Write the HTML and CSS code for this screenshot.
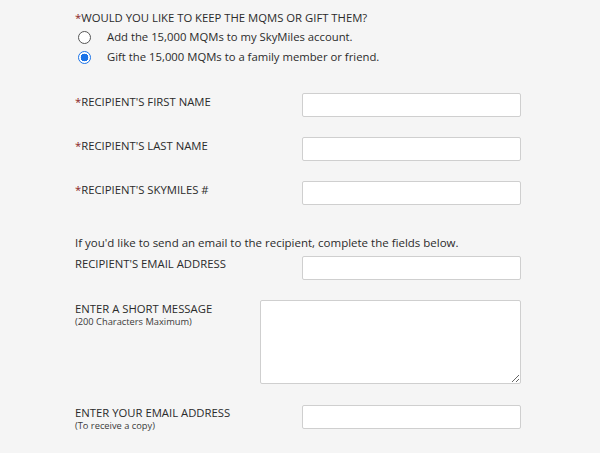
FILE: index.html
```html
<!DOCTYPE html>
<html>
<head>
<meta charset="utf-8">
<link rel="stylesheet" href="styles.css">
</head>
<body>
<form class="form">
  <p class="question"><span class="req">*</span>WOULD YOU LIKE TO KEEP THE MQMS OR GIFT THEM?</p>
  <div class="radios">
    <label class="radio"><span class="circle"></span>Add the 15,000 MQMs to my SkyMiles account.</label>
    <label class="radio"><span class="circle checked"></span>Gift the 15,000 MQMs to a family member or friend.</label>
  </div>

  <div class="row first">
    <div class="lbl"><span class="req">*</span>RECIPIENT'S FIRST NAME</div>
    <input class="field" type="text">
  </div>
  <div class="row">
    <div class="lbl"><span class="req">*</span>RECIPIENT'S LAST NAME</div>
    <input class="field" type="text">
  </div>
  <div class="row">
    <div class="lbl"><span class="req">*</span>RECIPIENT'S SKYMILES #</div>
    <input class="field" type="text">
  </div>

  <p class="note">If you'd like to send an email to the recipient, complete the fields below.</p>
  <div class="row email">
    <div class="lbl">RECIPIENT'S EMAIL ADDRESS</div>
    <input class="field" type="text">
  </div>
  <div class="row msg">
    <div class="lbl">ENTER A SHORT MESSAGE<small>(200 Characters Maximum)</small></div>
    <textarea class="area"></textarea>
  </div>
  <div class="row mine">
    <div class="lbl">ENTER YOUR EMAIL ADDRESS<small>(To receive a copy)</small></div>
    <input class="field" type="text">
  </div>
</form>
</body>
</html>
```
FILE: styles.css
```css
html, body {
  margin: 0;
  padding: 0;
  background: #f5f5f5;
}
body {
  font-family: "Open Sans", "DejaVu Sans", sans-serif;
  color: #2b2b2b;
}
.form {
  width: 446px;
  margin-left: 75px;
  padding-top: 11px;
  display: flex;
  flex-direction: column;
}
.req {
  color: #8c1d1d;
}
.question {
  margin: 0;
  font-size: 11.3px;
  line-height: 14px;
}
.radios {
  display: flex;
  flex-direction: column;
  margin-top: 2px;
}
.radio {
  display: flex;
  align-items: center;
  height: 20px;
  font-size: 11.3px;
  line-height: 20px;
}
.circle {
  box-sizing: border-box;
  width: 13px;
  height: 13px;
  border-radius: 50%;
  border: 1px solid #555;
  background: #fff;
  margin-left: 3px;
  margin-right: 16px;
  margin-top: 1px;
}
.circle.checked {
  border: 1px solid #1a73e8;
  background: radial-gradient(circle, #1a73e8 0 3.6px, #fff 4.1px);
}
.row {
  display: flex;
  justify-content: space-between;
  align-items: flex-start;
  margin-top: 20px;
}
.row.first {
  margin-top: 26px;
}
.lbl {
  font-size: 11.3px;
  line-height: 14px;
  padding-top: 2px;
}
.lbl small {
  display: block;
  font-size: 9.3px;
  line-height: 12px;
  color: #3a3a3a;
}
.field {
  box-sizing: border-box;
  width: 219px;
  height: 24px;
  margin: 0;
  border: 1px solid #cfcfcf;
  border-radius: 2px;
  background: #fff;
  padding: 0;
}
.area {
  box-sizing: border-box;
  width: 261px;
  height: 84px;
  margin: 0;
  border: 1px solid #cfcfcf;
  border-radius: 2px;
  background: #fff;
  padding: 0;
  resize: both;
}
.note {
  margin: 31px 0 0 0;
  font-size: 11.5px;
  line-height: 14px;
}
.row.email {
  margin-top: 6px;
}
.row.email .lbl {
  padding-top: 1px;
}
.row.msg {
  margin-top: 20px;
}
.row.msg .lbl {
  padding-top: 2px;
}
.row.mine {
  margin-top: 21px;
}
.row.mine .lbl {
  padding-top: 1px;
}
```
